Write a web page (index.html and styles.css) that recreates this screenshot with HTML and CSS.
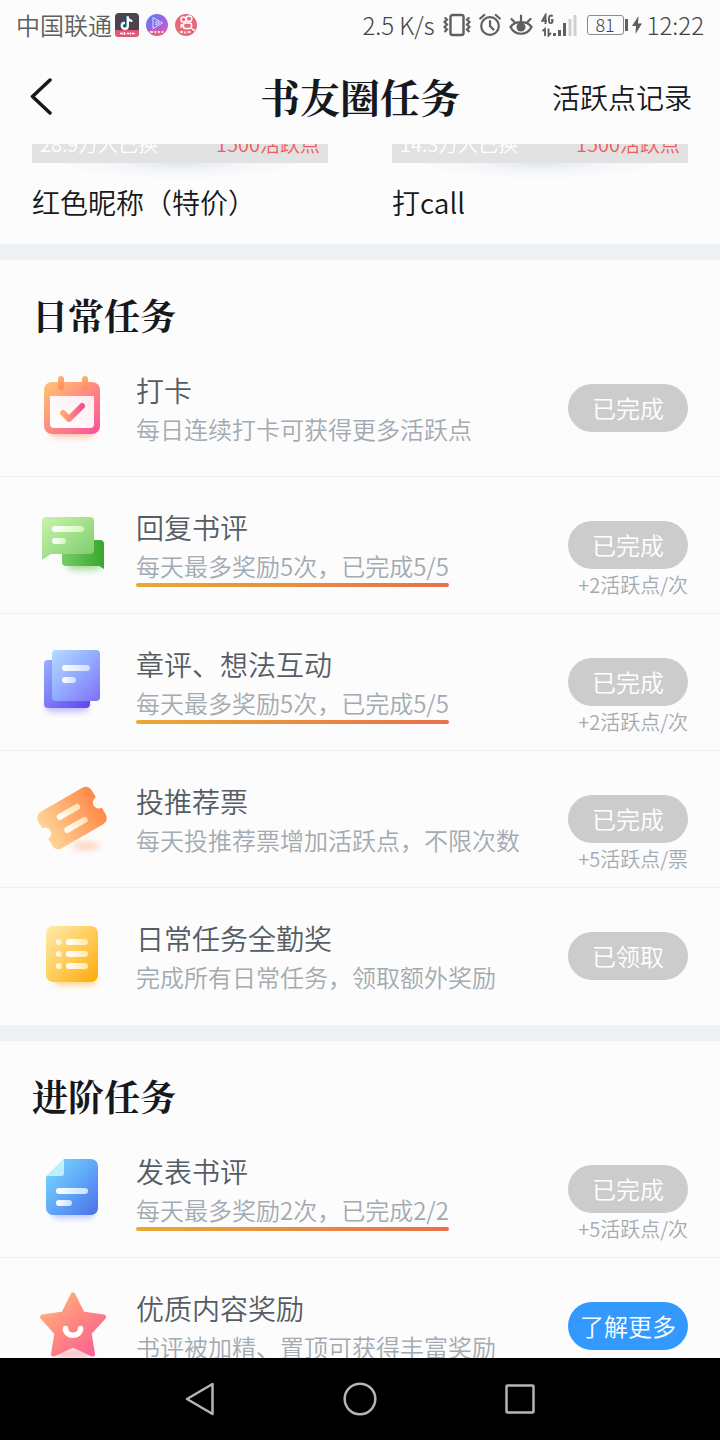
FILE: index.html
```html
<!DOCTYPE html>
<html lang="zh-CN">
<head>
<meta charset="utf-8">
<meta name="viewport" content="width=device-width, initial-scale=1">
<title>书友圈任务</title>
<link rel="stylesheet" href="styles.css">
</head>
<body>
<div class="app">
  <div class="status">
    <div class="status-left">
      <span>中国联通</span>
      <svg width="24" height="24" viewBox="0 0 24 24" aria-hidden="true">
        <rect width="24" height="24" rx="4" fill="#4b434f"/>
        <path d="M0 17h24v3a4 4 0 0 1-4 4H4a4 4 0 0 1-4-4z" fill="#e2567c"/>
        <path d="M12.500 3v9.500a3 3 0 1 1-3-3M12.500 4c.5 2.500 2 3.500 4.500 3.700" fill="none" stroke="#7de0e4" stroke-width="2.200"/>
        <path d="M13 3.500v9.500a3 3 0 1 1-3-3M13 4.500c.5 2.500 2 3.500 4.500 3.700" fill="none" stroke="#fff" stroke-width="1.800"/>
        <path d="M5 20.500h3M9.500 19v3M12 20.500h2M15.500 19.500v2M17 20.500h2.500" stroke="#fff" stroke-width="1.500"/>
      </svg>
      <svg class="round-badge" width="22" height="22" viewBox="0 0 22 22" aria-hidden="true">
        <defs><linearGradient id="b1" x1="0" y1="0" x2="1" y2="1"><stop offset="0" stop-color="#4f86f0"/><stop offset=".5" stop-color="#9a62e8"/><stop offset="1" stop-color="#e05cb8"/></linearGradient></defs>
        <circle cx="11" cy="11" r="11" fill="url(#b1)"/>
        <path d="M2 16.500h18a11 11 0 0 1-18 0z" fill="#ee6274"/>
        <path d="M7 3.500l9.500 5.500L7 14.500zM10 7l3.500 2-3.500 2z" fill="none" stroke="#cfe0ff" stroke-width="1"/>
        <path d="M4 18h3M8.500 18h2M12 18h2M15.500 18h2" stroke="#fff" stroke-width="1.600"/>
      </svg>
      <svg class="round-badge" width="22" height="22" viewBox="0 0 22 22" aria-hidden="true">
        <circle cx="11" cy="11" r="11" fill="#e56a7b"/>
        <circle cx="8.500" cy="5.500" r="2.500" fill="none" stroke="#fff" stroke-width="1.500"/>
        <circle cx="14" cy="4.800" r="2.800" fill="none" stroke="#fff" stroke-width="1.500"/>
        <rect x="8.500" y="9" width="8" height="5.500" rx="1.500" fill="none" stroke="#fff" stroke-width="1.600"/>
        <path d="M9 11l-3.500-1.500v4.500L9 12.500z" fill="#fff"/>
        <path d="M5 18h3M10 17.500v2M12.500 18h3M17 15l3 1.500" stroke="#fff" stroke-width="1.400"/>
      </svg>
    </div>
    <div class="status-right">
      <span>2.5 K/s</span>
      <svg width="28" height="24" viewBox="0 0 28 24" fill="none" stroke="#5f5f5f" aria-hidden="true">
        <rect x="7.500" y="2" width="13" height="20" rx="2" stroke-width="2.400"/>
        <path d="M1.500 4.500l2.500 2-2.500 2.500 2.500 2.500-2.500 2.500 2.500 2.500-2.500 2.500M26.500 4.500l-2.500 2 2.500 2.500-2.500 2.500 2.500 2.500-2.500 2.500 2.500 2.500" stroke-width="2.200"/>
      </svg>
      <svg width="22" height="24" viewBox="0 0 22 24" fill="none" stroke="#5f5f5f" stroke-width="2.200" stroke-linecap="round" aria-hidden="true">
        <circle cx="11" cy="13" r="8.800"/><path d="M11 8v5l3.500 3.500M1.200 5.500l4-3.500M20.800 5.500l-4-3.500"/>
      </svg>
      <svg width="24" height="24" viewBox="0 0 24 24" fill="none" stroke="#5f5f5f" stroke-width="2.200" stroke-linecap="round" aria-hidden="true">
        <path d="M1.500 14C6 7.500 18 7.500 22.500 14 18 23 6 23 1.500 14zM12 8V2.500M5.500 9L2.500 6M18.500 9L21.500 6"/>
        <circle cx="12" cy="14" r="4.500" fill="#5f5f5f" stroke="none"/>
      </svg>
      <svg width="36" height="24" viewBox="0 0 36 24" aria-hidden="true">
        <path d="M4.500 11V2L1.200 7.800h4.800M11.500 3.500C10.500 2 8 2.300 8 5v3c0 2.800 3.500 2.800 3.500 0V7H10M4 23v-7l-2.500 2M7.500 15.500v7l2.500-2.500" fill="none" stroke="#5f5f5f" stroke-width="1.900"/>
        <path d="M13.500 23v-3M18.500 23v-6M23.500 23V10" stroke="#5f5f5f" stroke-width="3"/>
        <path d="M29 23V6M34 23V2" stroke="#cfcfcf" stroke-width="3"/>
      </svg>
      <span class="battery"><span class="battery-level">81</span><span class="battery-tip"></span></span>
      <svg class="bolt" width="10" height="18" viewBox="0 0 10 18" aria-hidden="true"><path d="M6.500 0L0 10h4L3.500 18 10 7.500H6z" fill="#5f5f5f"/></svg>
      <time>12:22</time>
    </div>
  </div>

  <header class="topbar">
    <button class="back" type="button" aria-label="返回">
      <svg width="24" height="40" viewBox="0 0 24 40" fill="none" stroke="#15181c" stroke-width="3.500" stroke-linecap="round" stroke-linejoin="round"><path d="M22 3L4.500 19.500 22 36"/></svg>
    </button>
    <h1>书友圈任务</h1>
    <a class="history" href="#history">活跃点记录</a>
  </header>

  <main class="content">
    <section class="rewards">
      <article class="reward">
        <div class="reward-crop"><div class="reward-bar"><span>28.9万人已换</span><span class="cost">1500活跃点</span></div></div>
        <h3>红色昵称（特价）</h3>
      </article>
      <article class="reward">
        <div class="reward-crop"><div class="reward-bar"><span>14.3万人已换</span><span class="cost">1500活跃点</span></div></div>
        <h3>打call</h3>
      </article>
    </section>

    <section class="tasks">
      <h2>日常任务</h2>
      <ul>
        <li class="task">
          <svg class="icon" viewBox="0 0 80 80" aria-hidden="true">
            <defs>
              <linearGradient id="cal" x1="0" y1="0" x2="1" y2="1"><stop offset="0" stop-color="#ffc673"/><stop offset=".5" stop-color="#ff8a80"/><stop offset="1" stop-color="#f84fa0"/></linearGradient>
              <linearGradient id="ring" x1="0" y1="0" x2="0" y2="1"><stop offset="0" stop-color="#ffb07a"/><stop offset="1" stop-color="#ff8a58"/></linearGradient>
              <linearGradient id="paper" x1="1" y1="0" x2="0" y2="1"><stop offset="0" stop-color="#ffecef"/><stop offset="1" stop-color="#fff"/></linearGradient>
              <linearGradient id="tick" x1="0" y1="0" x2="1" y2="0"><stop offset="0" stop-color="#ffab70"/><stop offset="1" stop-color="#f84f94"/></linearGradient>
              <filter id="soft" x="-40%" y="-80%" width="180%" height="260%"><feGaussianBlur stdDeviation="3"/></filter>
            </defs>
            <rect x="18" y="58" width="44" height="11" rx="5" fill="#ff9a70" opacity=".6" filter="url(#soft)"/>
            <rect x="12" y="14" width="56" height="52" rx="8" fill="url(#cal)"/>
            <path d="M18 28h44v28a4 4 0 0 1-4 4H22a4 4 0 0 1-4-4z" fill="url(#paper)"/>
            <rect x="26" y="8" width="6" height="14" rx="3" fill="url(#ring)"/><rect x="50" y="8" width="6" height="14" rx="3" fill="url(#ring)"/>
            <path d="M31 45l6 6 13-13" fill="none" stroke="url(#tick)" stroke-width="6" stroke-linecap="round" stroke-linejoin="round"/>
          </svg>
          <div class="info"><h3>打卡</h3><p>每日连续打卡可获得更多活跃点</p></div>
          <div class="action"><button class="pill" type="button">已完成</button></div>
        </li>
        <li class="task">
          <svg class="icon" viewBox="0 0 80 80" aria-hidden="true">
            <defs>
              <linearGradient id="g1" x1="0" y1="0" x2="1" y2="1"><stop offset="0" stop-color="#c8f5ac"/><stop offset="1" stop-color="#7bca6b"/></linearGradient>
              <linearGradient id="g2" x1="0" y1="0" x2="1" y2="0"><stop offset="0" stop-color="#78cc68"/><stop offset="1" stop-color="#35a82b"/></linearGradient>
              <linearGradient id="g3" x1="0" y1="0" x2="1" y2="0"><stop offset="0" stop-color="#fff"/><stop offset="1" stop-color="#d5f7b5"/></linearGradient>
            </defs>
            <rect x="36" y="56" width="32" height="9" rx="4" fill="#6cc85c" opacity=".6" filter="url(#soft)"/>
            <path d="M34 35h34a4 4 0 0 1 4 4v25l-5-3H34a4 4 0 0 1-4-4V39z" fill="url(#g2)"/>
            <path d="M14 12h44a4 4 0 0 1 4 4v29a4 4 0 0 1-4 4H19l-9 6V16a4 4 0 0 1 4-4z" fill="url(#g1)"/>
            <rect x="20" y="21" width="32" height="6" rx="3" fill="url(#g3)"/><rect x="20" y="33" width="14" height="6" rx="3" fill="url(#g3)"/>
          </svg>
          <div class="info"><h3>回复书评</h3><p class="marked">每天最多奖励5次，已完成5/5</p></div>
          <div class="action"><button class="pill" type="button">已完成</button><small>+2活跃点/次</small></div>
        </li>
        <li class="task">
          <svg class="icon" viewBox="0 0 80 80" aria-hidden="true">
            <defs>
              <linearGradient id="p1" x1="0" y1="0" x2="1" y2="1"><stop offset="0" stop-color="#b5dcff"/><stop offset=".5" stop-color="#93abff"/><stop offset="1" stop-color="#806ff8"/></linearGradient>
              <linearGradient id="p2" x1="0" y1="0" x2="1" y2="1"><stop offset="0" stop-color="#97b1ff"/><stop offset="1" stop-color="#6042ee"/></linearGradient>
              <linearGradient id="p3" x1="0" y1="0" x2="1" y2="0"><stop offset="0" stop-color="#fff"/><stop offset="1" stop-color="#cfdcff"/></linearGradient>
            </defs>
            <rect x="14" y="60" width="42" height="10" rx="4" fill="#8a7bff" opacity=".5" filter="url(#soft)"/>
            <rect x="12" y="18" width="46" height="48" rx="4" fill="url(#p2)"/>
            <rect x="20" y="8" width="48" height="51" rx="4" fill="url(#p1)"/>
            <rect x="30" y="23" width="28" height="6" rx="3" fill="url(#p3)"/><rect x="30" y="35" width="14" height="6" rx="3" fill="url(#p3)"/>
          </svg>
          <div class="info"><h3>章评、想法互动</h3><p class="marked">每天最多奖励5次，已完成5/5</p></div>
          <div class="action"><button class="pill" type="button">已完成</button><small>+2活跃点/次</small></div>
        </li>
        <li class="task">
          <svg class="icon" viewBox="0 0 80 80" aria-hidden="true">
            <defs>
              <linearGradient id="t1" x1="0" y1="0" x2="1" y2="0"><stop offset="0" stop-color="#ffd596"/><stop offset="1" stop-color="#ff8848"/></linearGradient>
              <linearGradient id="t2" gradientUnits="userSpaceOnUse" x1="-12" y1="0" x2="12" y2="0"><stop offset="0" stop-color="#fff"/><stop offset="1" stop-color="#ffe3b0"/></linearGradient>
            </defs>
            <ellipse cx="54" cy="67" rx="14" ry="4" fill="#ff8e58" opacity=".4" filter="url(#soft)"/>
            <g transform="translate(40 39) rotate(-30)">
              <path d="M-24-21H24a7 7 0 0 1 7 7V-6a6 6 0 0 0 0 12v8a7 7 0 0 1-7 7H-24a7 7 0 0 1-7-7V6a6 6 0 0 0 0-12v-8a7 7 0 0 1 7-7z" fill="url(#t1)"/>
              <rect x="-13" y="-10" width="26" height="6" rx="3" fill="url(#t2)"/><rect x="-13" y="5" width="26" height="6" rx="3" fill="url(#t2)"/>
            </g>
          </svg>
          <div class="info"><h3>投推荐票</h3><p>每天投推荐票增加活跃点，不限次数</p></div>
          <div class="action"><button class="pill" type="button">已完成</button><small>+5活跃点/票</small></div>
        </li>
        <li class="task">
          <svg class="icon" viewBox="0 0 80 80" aria-hidden="true">
            <defs>
              <linearGradient id="y1" x1="0" y1="0" x2="1" y2="1"><stop offset="0" stop-color="#ffebb0"/><stop offset=".5" stop-color="#ffcd5a"/><stop offset="1" stop-color="#ffa80c"/></linearGradient>
              <linearGradient id="y2" x1="0" y1="0" x2="1" y2="0"><stop offset="0" stop-color="#fff"/><stop offset="1" stop-color="#ffeaa8"/></linearGradient>
            </defs>
            <rect x="22" y="58" width="42" height="11" rx="5" fill="#ffb93c" opacity=".6" filter="url(#soft)"/>
            <rect x="14" y="10" width="52" height="56" rx="7" fill="url(#y1)"/>
            <g fill="url(#y2)"><circle cx="27" cy="26" r="3"/><circle cx="27" cy="38" r="3"/><circle cx="27" cy="50" r="3"/>
            <rect x="34" y="23" width="22" height="6" rx="3"/><rect x="34" y="35" width="22" height="6" rx="3"/><rect x="34" y="47" width="22" height="6" rx="3"/></g>
          </svg>
          <div class="info"><h3>日常任务全勤奖</h3><p>完成所有日常任务，领取额外奖励</p></div>
          <div class="action"><button class="pill" type="button">已领取</button></div>
        </li>
      </ul>
    </section>

    <section class="tasks">
      <h2>进阶任务</h2>
      <ul>
        <li class="task">
          <svg class="icon" viewBox="0 0 80 80" aria-hidden="true">
            <defs>
              <linearGradient id="d1" x1="0" y1="0" x2="1" y2="1"><stop offset="0" stop-color="#7bdcff"/><stop offset=".5" stop-color="#60a9f8"/><stop offset="1" stop-color="#4b6fe8"/></linearGradient>
              <linearGradient id="d2" x1="0" y1="0" x2="1" y2="0"><stop offset="0" stop-color="#fff"/><stop offset="1" stop-color="#c5e2ff"/></linearGradient>
            </defs>
            <rect x="20" y="58" width="42" height="11" rx="5" fill="#6d95ff" opacity=".5" filter="url(#soft)"/>
            <path d="M32 10h27a7 7 0 0 1 7 7v42a7 7 0 0 1-7 7H21a7 7 0 0 1-7-7V28z" fill="url(#d1)"/>
            <path d="M32 10v14a3 3 0 0 1-3 3H14z" fill="#c1eeff"/>
            <rect x="24" y="39" width="32" height="6" rx="3" fill="url(#d2)"/><rect x="24" y="51" width="16" height="6" rx="3" fill="url(#d2)"/>
          </svg>
          <div class="info"><h3>发表书评</h3><p class="marked">每天最多奖励2次，已完成2/2</p></div>
          <div class="action"><button class="pill" type="button">已完成</button><small>+5活跃点/次</small></div>
        </li>
        <li class="task">
          <svg class="icon" viewBox="0 0 80 80" aria-hidden="true">
            <defs><linearGradient id="s1" x1="0" y1="0" x2="1" y2="1"><stop offset=".1" stop-color="#ffb07c"/><stop offset=".5" stop-color="#ff8680"/><stop offset="1" stop-color="#fa5c98"/></linearGradient></defs>
            <ellipse cx="41" cy="68" rx="20" ry="5" fill="#ff8a90" opacity=".5" filter="url(#soft)"/>
            <path d="M41 9l9.500 19 21 3L57 47l3.500 21L41 59 21.500 68 25 47 10.500 31l21-3z" fill="url(#s1)" stroke="url(#s1)" stroke-width="5" stroke-linejoin="round"/>
            <path d="M33.500 42.500c0 9 15 9 15 0" fill="none" stroke="#fff" stroke-width="5.500" stroke-linecap="round"/>
          </svg>
          <div class="info"><h3>优质内容奖励</h3><p>书评被加精、置顶可获得丰富奖励</p></div>
          <div class="action"><button class="pill primary" type="button">了解更多</button></div>
        </li>
      </ul>
    </section>
  </main>

  <nav class="sysnav">
    <button type="button" aria-label="后退"><svg width="40" height="40" viewBox="0 0 40 40"><path d="M32.500 5v30L7 20z"/></svg></button>
    <button type="button" aria-label="主屏幕"><svg width="40" height="40" viewBox="0 0 40 40"><circle cx="20" cy="20" r="15.300"/></svg></button>
    <button type="button" aria-label="最近任务"><svg width="40" height="40" viewBox="0 0 40 40"><rect x="6.500" y="6.500" width="27" height="27" rx="1"/></svg></button>
  </nav>
</div>
</body>
</html>
```
FILE: styles.css
```css
* { box-sizing: border-box; }
body, h1, h2, h3, p, ul { margin: 0; padding: 0; }
ul { list-style: none; }
button { border: 0; background: none; padding: 0; font: inherit; color: inherit; }
svg { display: block; flex: none; }

body {
  background: #fcfcfc;
  color: #15181c;
  font-family: "Noto Sans CJK SC", sans-serif;
  font-weight: 350;
}
.app {
  display: flex;
  flex-direction: column;
  height: 100vh;
  overflow: hidden;
}

.status {
  flex: none;
  display: flex;
  justify-content: space-between;
  align-items: center;
  height: 50px;
  padding: 0 16px;
  font-size: 24px;
  line-height: 30px;
  color: #5f5f5f;
  white-space: nowrap;
}
.status-left, .status-right { display: flex; align-items: center; }
.status-left { gap: 3px; }
.round-badge { margin-left: 4px; }
.status-right { gap: 8px; font-weight: 300; color: #444; }
.battery { display: flex; align-items: center; gap: 1px; margin-left: 2px; }
.battery-level {
  width: 37px;
  height: 20px;
  border: 1px solid #8a8a8a;
  border-radius: 3px;
  font-size: 18px;
  line-height: 16px;
  text-align: center;
}
.battery-tip { width: 3px; height: 12px; background: #5f5f5f; }
.bolt { margin: 0 -3px 0 -4px; }

.topbar {
  flex: none;
  display: grid;
  grid-template-columns: 1fr auto 1fr;
  align-items: center;
  height: 94px;
  padding: 0 28px;
}
.back { justify-self: start; }
.topbar h1 {
  padding-bottom: 2px;
  font-family: "Noto Serif CJK SC", "Noto Sans CJK SC", serif;
  font-size: 40px;
  line-height: 56px;
  font-weight: 700;
}
.history {
  justify-self: end;
  color: inherit;
  text-decoration: none;
  font-size: 28px;
  line-height: 40px;
}

.content { flex: 1; min-height: 0; overflow: hidden; }

.rewards {
  display: grid;
  grid-template-columns: 1fr 1fr;
  gap: 64px;
  padding: 0 32px 22px;
}
.reward-crop {
  display: flex;
  align-items: flex-end;
  height: 38px;
  padding-bottom: 19px;
  overflow: hidden;
  background: radial-gradient(ellipse 42% 90% at 50% 0, #e2e6ee, #f4f6f9 50%, #fcfcfc) left bottom / 100% 19px no-repeat;
}
.reward-bar {
  flex: 1;
  display: flex;
  justify-content: space-between;
  padding: 0 8px 4px;
  background: #e2e2e2;
  color: #fff;
  font-size: 20px;
  line-height: 30px;
}
.cost { color: #ee5b5b; }
.reward h3 { font-size: 28px; line-height: 40px; font-weight: inherit; }

.tasks { border-top: 16px solid #edf1f5; }
.tasks h2 {
  padding: 33px 32px 3px;
  font-family: "Noto Serif CJK SC", "Noto Sans CJK SC", serif;
  font-size: 36px;
  line-height: 44px;
  font-weight: 700;
}
.task {
  display: flex;
  align-items: flex-start;
  padding: 0 32px 16px;
  border-bottom: 1px solid #eeeff0;
}
.task:last-child { border-bottom-color: transparent; }
.icon { width: 80px; height: 80px; margin-top: 28px; }
.info {
  flex: 1;
  min-width: 0;
  padding: 30px 0 8px 24px;
}
.info h3 {
  font-size: 28px;
  line-height: 40px;
  font-weight: inherit;
  color: #555c64;
}
.info p {
  position: relative;
  width: fit-content;
  padding-bottom: 4px;
  font-size: 24px;
  line-height: 38px;
  color: #a3aab1;
}
.marked::after {
  content: "";
  position: absolute;
  left: 0;
  right: 0;
  bottom: 2px;
  height: 4px;
  border-radius: 2px;
  background: linear-gradient(90deg, #eba933, #e8704a);
}
.action {
  display: flex;
  flex-direction: column;
  align-items: flex-end;
  gap: 4px;
  padding-top: 44px;
}
.pill {
  width: 120px;
  height: 48px;
  border-radius: 24px;
  background: #ccc;
  color: #fff;
  font-size: 24px;
  line-height: 48px;
}
.primary { background: #3399ff; }
.action small { font-size: 20px; line-height: 24px; color: #a3aab1; }

.sysnav {
  flex: none;
  display: flex;
  justify-content: center;
  align-items: center;
  gap: 120px;
  height: 82px;
  background: #000;
}
.sysnav svg { fill: none; stroke: #b5b5b5; stroke-width: 2.5; stroke-linejoin: round; }
```
